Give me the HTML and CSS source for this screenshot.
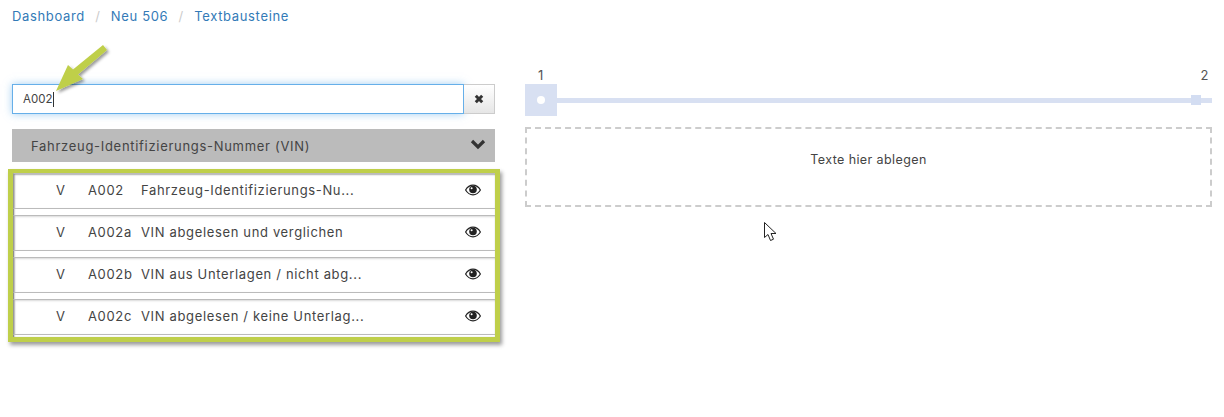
FILE: index.html
```html
<!DOCTYPE html>
<html lang="de">
<head>
    <meta charset="UTF-8">
    <title>Textbausteine</title>
    <link rel="stylesheet" href="styles.css">
</head>
<body>
    <nav class="breadcrumb">
        <a href="#">Dashboard</a><span class="sep">/</span><a href="#">Neu 506</a><span class="sep">/</span><a href="#">Textbausteine</a>
    </nav>

    <div class="columns">
        <div class="left">
            <div class="search">
                <div class="search-input">A002<span class="caret"></span></div>
                <button class="clear">
                    <svg width="10" height="10" viewBox="0 0 10 10"><path d="M1.800 1.800 8.200 8.200M8.200 1.800 1.800 8.200" stroke="#333" stroke-width="3" fill="none"/></svg>
                </button>
            </div>

            <div class="group">
                <span>Fahrzeug-Identifizierungs-Nummer (VIN)</span>
                <svg width="16" height="11" viewBox="0 0 16 11"><path d="M2 2 8 8 14 2" stroke="#333" stroke-width="3.200" fill="none"/></svg>
            </div>

            <div class="frame">
                <div class="row">
                    <span class="type">V</span><span class="code">A002</span><span class="name">Fahrzeug-Identifizierungs-Nu...</span>
                    <svg class="eye" width="16" height="12" viewBox="0 0 16 12"><path d="M.6 6C2.4 3 5 1.2 8 1.2S13.600 3 15.400 6C13.600 9 11 10.800 8 10.800S2.400 9 .6 6Z" fill="#fff" stroke="#222" stroke-width="1.200"/><circle cx="8" cy="5.500" r="3.800" fill="#222"/><circle cx="6.600" cy="4.200" r="1" fill="#fff"/></svg>
                </div>
                <div class="row">
                    <span class="type">V</span><span class="code">A002a</span><span class="name">VIN abgelesen und verglichen</span>
                    <svg class="eye" width="16" height="12" viewBox="0 0 16 12"><path d="M.6 6C2.4 3 5 1.2 8 1.2S13.600 3 15.400 6C13.600 9 11 10.800 8 10.800S2.400 9 .6 6Z" fill="#fff" stroke="#222" stroke-width="1.200"/><circle cx="8" cy="5.500" r="3.800" fill="#222"/><circle cx="6.600" cy="4.200" r="1" fill="#fff"/></svg>
                </div>
                <div class="row">
                    <span class="type">V</span><span class="code">A002b</span><span class="name">VIN aus Unterlagen / nicht abg...</span>
                    <svg class="eye" width="16" height="12" viewBox="0 0 16 12"><path d="M.6 6C2.4 3 5 1.2 8 1.2S13.600 3 15.400 6C13.600 9 11 10.800 8 10.800S2.400 9 .6 6Z" fill="#fff" stroke="#222" stroke-width="1.200"/><circle cx="8" cy="5.500" r="3.800" fill="#222"/><circle cx="6.600" cy="4.200" r="1" fill="#fff"/></svg>
                </div>
                <div class="row">
                    <span class="type">V</span><span class="code">A002c</span><span class="name">VIN abgelesen / keine Unterlag...</span>
                    <svg class="eye" width="16" height="12" viewBox="0 0 16 12"><path d="M.6 6C2.4 3 5 1.2 8 1.2S13.600 3 15.400 6C13.600 9 11 10.800 8 10.800S2.400 9 .6 6Z" fill="#fff" stroke="#222" stroke-width="1.200"/><circle cx="8" cy="5.500" r="3.800" fill="#222"/><circle cx="6.600" cy="4.200" r="1" fill="#fff"/></svg>
                </div>
            </div>
        </div>

        <div class="right">
            <div class="labels"><span class="label-first">1</span><span class="label-last">2</span></div>
            <div class="stepper">
                <div class="step"><span class="dot"></span></div>
                <div class="track"><span class="handle"></span></div>
            </div>
            <div class="dropzone">Texte hier ablegen</div>
        </div>
    </div>

    <!-- Annotation arrow -->
    <svg class="arrow" width="70" height="62" viewBox="0 0 70 62">
        <defs>
            <filter id="arrowShadow" x="-20%" y="-20%" width="150%" height="150%">
                <feDropShadow dx="2" dy="2" stdDeviation="1.500" flood-color="#000" flood-opacity="0.4"/>
            </filter>
        </defs>
        <path d="M58 2 62 7 33 31.500 38 36 11 48 23 22 28 26.500Z" fill="#bfcf4a" filter="url(#arrowShadow)"/>
    </svg>

    <!-- Mouse pointer -->
    <svg class="pointer" width="14" height="20" viewBox="0 0 14 20">
        <path d="M.5.5V15.500L4 12.500 6.500 18.500 9.500 17.200 7 11.500H12Z" fill="#fff" stroke="#222" stroke-width="1"/>
    </svg>
</body>
</html>
```

FILE: styles.css
```css
* {
    box-sizing: border-box;
}
body {
    font-family: 'Inter', 'Liberation Sans', sans-serif;
    font-size: 13px;
    letter-spacing: 0.65px;
    color: #444444;
    background: #ffffff;
    margin: 0;
    padding: 0 12px;
    height: 417px;
    overflow: hidden;
}
.breadcrumb {
    height: 84px;
    padding-top: 8px;
    line-height: 16px;
}
.breadcrumb a {
    color: #337ab7;
    text-decoration: none;
}
.sep {
    color: #cccccc;
    padding: 0 10.300px;
}
.columns {
    display: flex;
    gap: 30px;
}
.left {
    width: 483px;
}
.right {
    width: 687px;
}

/* Search */
.search {
    display: flex;
    height: 30px;
    margin-bottom: 15px;
}
.search-input {
    flex: 1;
    display: flex;
    align-items: center;
    padding-left: 10px;
    font-size: 11.500px;
    letter-spacing: 0;
    border: 1px solid #66afe9;
    box-shadow: 0 0 8px rgba(102, 175, 233, 0.6);
}
.caret {
    width: 1px;
    height: 15px;
    margin-left: 1px;
    background: #333333;
}
.clear {
    width: 31px;
    padding: 0;
    display: flex;
    align-items: center;
    justify-content: center;
    border: 1px solid #cccccc;
    border-left: 0;
    background: linear-gradient(#ffffff, #e6e6e6);
}
.group {
    display: flex;
    align-items: center;
    justify-content: space-between;
    height: 33px;
    padding: 0 9px 0 19px;
    background: #bbbbbb;
    letter-spacing: 0.7px;
}
.group svg {
    margin-top: -2px;
}

/* Green highlighted list */
.frame {
    display: flex;
    flex-direction: column;
    gap: 6px;
    width: 492px;
    margin: 7px 0 0 -4px;
    padding-bottom: 2px;
    border: 5px solid #bfcf4a;
    border-top-width: 4px;
    background: #ffffff;
    box-shadow: inset 1px 1px 2px #666666, 2px 3px 4px rgba(0, 0, 0, 0.4);
}
.row {
    display: flex;
    align-items: center;
    height: 36px;
    padding-bottom: 2px;
    border-top: 1px solid #bbbbbb;
    border-bottom: 1px solid #bbbbbb;
    border-left: 1px solid #999999;
    box-shadow: inset 1px 1px 2px rgba(0, 0, 0, 0.15);
}
.type {
    width: 74px;
    padding-left: 42px;
}
.code {
    width: 53px;
}
.name {
    flex: 1;
}
.eye {
    margin-right: 14px;
}

/* Stepper */
.labels {
    display: flex;
    justify-content: space-between;
    height: 0;
    padding: 0 3px 0 13px;
}
.label-first,
.label-last {
    position: relative;
    top: -17px;
    line-height: 16px;
    height: 16px;
    color: #555555;
}
.stepper {
    display: flex;
    align-items: center;
    height: 32px;
    margin-bottom: 11px;
}
.step {
    display: flex;
    align-items: center;
    justify-content: center;
    width: 32px;
    height: 32px;
    background: #d8e0f2;
}
.dot {
    width: 8px;
    height: 8px;
    border-radius: 50%;
    background: #ffffff;
}
.track {
    flex: 1;
    display: flex;
    align-items: center;
    justify-content: flex-end;
    height: 5px;
    padding-right: 11px;
    background: #d8e0f2;
}
.handle {
    width: 10px;
    height: 10px;
    background: #d3ddf2;
}
.dropzone {
    height: 80px;
    padding-top: 23px;
    line-height: 16px;
    text-align: center;
    font-size: 12.500px;
    letter-spacing: 0.4px;
    border: 2px dashed #cccccc;
}

/* Things lying over the page */
.arrow {
    position: absolute;
    left: 45px;
    top: 43px;
}
.pointer {
    position: absolute;
    left: 764px;
    top: 222px;
}
```
